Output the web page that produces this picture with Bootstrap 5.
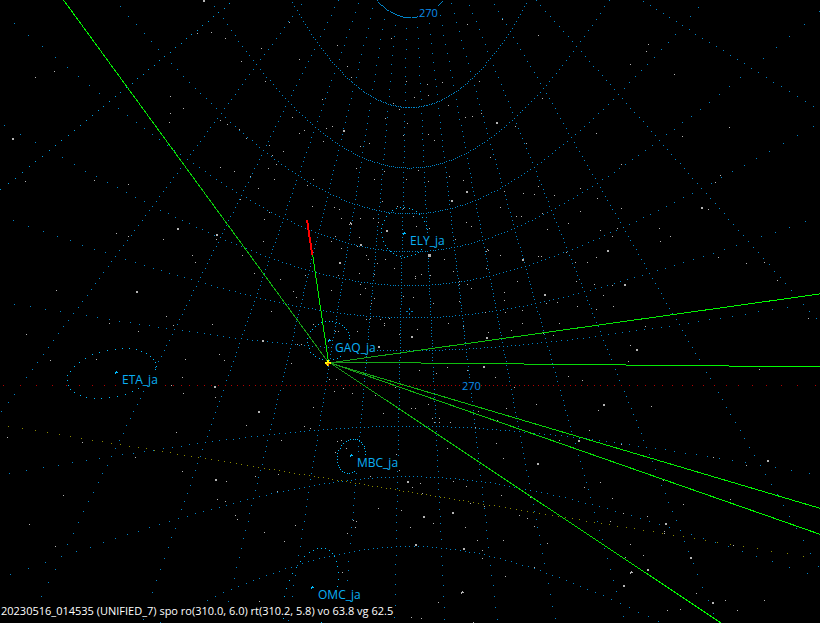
<!DOCTYPE html>
<html lang="en">
<head>
<meta charset="utf-8">
<meta name="viewport" content="width=device-width, initial-scale=1">
<title>Meteor radiant chart</title>
<link href="https://cdn.jsdelivr.net/npm/bootstrap@5.3.0/dist/css/bootstrap.min.css" rel="stylesheet">
<style>
body { background: #000; font-family: "Open Sans", "Noto Sans", sans-serif; font-size: 12px; }
.sky { shape-rendering: crispEdges; }
.sky text { font-family: "Open Sans", "Noto Sans", sans-serif; font-size: 12px; fill: #0ab0f4; }
.sky .ra-label { font-size: 11px; fill: #0a8cec; }
.grid-dots { fill: #0084c8; }
.zero-dots { fill: #00a0e4; }
.equator-dots { fill: #b40000; }
.ecliptic-dots { fill: #8c8c00; }
.shower-dots { fill: #00bcff; }
.star-dots { fill: #b4b4b4; }
.label-back { fill: #000; }
.status-line { color: #fff; font-size: 11px; line-height: 16px; padding: 0 1px 4px; }
.status-line span { background: #000; }
</style>
<script src="https://cdn.jsdelivr.net/npm/bootstrap@5.3.0/dist/js/bootstrap.bundle.min.js"></script>
</head>
<body>
<main class="position-relative vh-100 overflow-hidden">
  <svg class="sky d-block w-100 h-100" viewBox="0 0 820 623" preserveAspectRatio="xMidYMid slice" role="img" aria-label="Sky chart with meteor showers">
    <defs>
      <radialGradient id="trace" gradientUnits="userSpaceOnUse" cx="328" cy="362" r="500">
        <stop offset="0" stop-color="#1c961c"/>
        <stop offset=".2" stop-color="#10b810"/>
        <stop offset=".5" stop-color="#08dc08"/>
        <stop offset=".9" stop-color="#00ff00"/>
      </radialGradient>
    </defs>
    <path id="grid" class="grid-dots"/>
    <path id="zero" class="zero-dots"/>
    <path id="equator" class="equator-dots"/>
    <path id="ecliptic" class="ecliptic-dots"/>
    <path id="stars" class="star-dots"/>
    <path id="showers" class="shower-dots"/>
    <path class="grid-dots" d="M406 311h2v1h-2zM411 311h2v1h-2zM409 308h1v2h-1zM409 313h1v2h-1z"/>
    <g id="labels">
      <text class="ra-label" x="419" y="17">270</text>
      <text class="ra-label" x="462" y="390">270</text>
      <text x="410" y="245">ELY_ja</text>
      <text x="335" y="352">GAQ_ja</text>
      <text x="122" y="384">ETA_ja</text>
      <text x="357" y="467">MBC_ja</text>
      <text x="318" y="599">OMC_ja</text>
    </g>
    <g fill="none" stroke="url(#trace)" stroke-width="1">
      <path d="M328 362L63.5 0"/>
      <path d="M328 363.1L820 293.9"/>
      <path d="M328 362.1L820 366.9"/>
      <path d="M328 362.5L820 508.3"/>
      <path d="M328 362.1L820 534.3"/>
      <path d="M328 361.5L721 623"/>
    </g>
    <path d="M312.5 254L328.5 362" stroke="#00f000"/>
    <path d="M307 220L312.3 255" stroke="#ff0000" stroke-width="2"/>
    <path fill="#ffff00" d="M327 360h2v6h-2zM325 362h6v2h-6z"/>
    <path fill="#ff8000" d="M327 363h3v1h-3zM328 364h1v2h-1zM326 364h1v1h-1z"/>
  </svg>
  <div class="status-line position-absolute bottom-0 start-0 text-nowrap"><span>20230516_014535 (UNIFIED_7) spo ro(310.0, 6.0) rt(310.2, 5.8) vo 63.8 vg 62.5</span></div>
</main>
<script>
const RAD = Math.PI / 180;
const view = { x: 410, y: 311.5, scale: 183.6, ra: 286.95, dec: 22 };

// Gnomonic projection, right ascension growing to the left
function project(ra, dec) {
  const a = (ra - view.ra) * RAD, d = dec * RAD, d0 = view.dec * RAD;
  const c = Math.sin(d0) * Math.sin(d) + Math.cos(d0) * Math.cos(d) * Math.cos(a);
  if (c < 0.05) return null;
  return [
    view.x - view.scale * Math.cos(d) * Math.sin(a) / c,
    view.y - view.scale * (Math.cos(d0) * Math.sin(d) - Math.sin(d0) * Math.cos(d) * Math.cos(a)) / c
  ];
}
function unproject(px, py) {
  const x = (view.x - px) / view.scale, y = (view.y - py) / view.scale, d0 = view.dec * RAD;
  const c = Math.atan(Math.hypot(x, y)), r = Math.hypot(x, y);
  const dec = Math.asin(Math.cos(c) * Math.sin(d0) + y * Math.sin(c) * Math.cos(d0) / r);
  const ra = Math.atan2(x * Math.sin(c), r * Math.cos(d0) * Math.cos(c) - y * Math.sin(d0) * Math.sin(c));
  return [view.ra + ra / RAD, dec / RAD];
}
function dot(p, size = 1) {
  if (!p || p[0] < 0 || p[0] > 820 || p[1] < 0 || p[1] > 623) return "";
  return `M${Math.floor(p[0])} ${Math.floor(p[1])}h${size}v${size}h-${size}z`;
}
const put = (id, d) => document.getElementById(id).setAttribute("d", d);

let grid = "", zero = "", equator = "", ecliptic = "";
for (let ra = 0; ra < 360; ra++) {
  for (let dec = -80; dec <= 80; dec += 10) {
    if (dec) grid += dot(project(ra, dec)); else equator += dot(project(ra, 0));
  }
}
for (let ra = 0; ra < 360; ra += 10) {
  for (let dec = -79; dec < 80; dec++) {
    if (dec === 0) continue;
    if (ra) grid += dot(project(ra, dec)); else zero += dot(project(ra, dec));
  }
}
const eps = 23.44 * RAD;
for (let l = 0; l < 360; l++) {
  const s = Math.sin(l * RAD);
  ecliptic += dot(project(Math.atan2(s * Math.cos(eps), Math.cos(l * RAD)) / RAD, Math.asin(s * Math.sin(eps)) / RAD));
}
put("grid", grid); put("zero", zero); put("equator", equator); put("ecliptic", ecliptic);

// Shower radiants: chart position and radius in degrees
let showers = "";
for (const [x, y, r] of [[404.5, 233.5, 6.5], [329.5, 340.5, 5.4], [116.5, 372.5, 3.8], [351.5, 455.5, 3.2], [312.5, 587.5, 4]]) {
  const [ra, dec] = unproject(x, y), d = dec * RAD, R = r * RAD;
  for (let t = 0; t < 360; t += 10) {
    const T = t * RAD;
    const d2 = Math.asin(Math.sin(d) * Math.cos(R) + Math.cos(d) * Math.sin(R) * Math.cos(T));
    const a2 = Math.atan2(Math.sin(T) * Math.sin(R) * Math.cos(d), Math.cos(R) - Math.sin(d) * Math.sin(d2));
    showers += dot(project(ra + a2 / RAD, d2 / RAD));
  }
  const cx = Math.floor(x), cy = Math.floor(y);
  showers += `M${cx - 1} ${cy}h3v1h-3zM${cx} ${cy - 1}h1v1h-1zM${cx - 1} ${cy + 1}h1v1h-1z`;
}
put("showers", showers);

const faint = `35,77 54,71 25,181 94,180 128,184 170,96 183,108 170,113 169,122 197,33 211,32 225,38 261,48 241,61 265,81 220,120 227,124 239,129 246,138 269,145 272,155 276,164 268,168 274,179 220,167 234,171 250,176 258,188 240,199
289,22 337,45 299,59 391,38 347,66 351,77 322,99 467,24 502,19 538,35 406,81 427,84 442,82 479,81 428,95 414,97 393,103 399,109 385,118 407,123 448,105 465,117 472,116 481,113 542,98 515,126 292,117 304,130 299,133 326,128 332,126 323,141 283,151 360,146 369,143 403,135 428,134 434,140 418,170 428,181 449,176 463,180 406,179 384,171 356,168 374,179 313,179 307,185 312,206 339,209 334,207 382,201 397,206 490,157 526,143 504,191 523,193 534,194 538,186 500,207
648,44 646,51 630,64 674,74 596,133 621,164 682,136 729,127 720,175 715,182 580,188 554,195 597,198 621,208 708,209
116,233 128,236 163,239 192,255 195,262 216,239 56,290 242,255 254,273 264,219 269,212 263,241 271,311 26,334 109,323 138,331 166,316 173,325 212,324 96,359 50,360 185,359 219,354 224,360 182,377 157,386 171,385 183,393 215,397
341,218 349,224 351,223 350,222 350,223 351,224 360,218 373,218 378,222 403,208 413,216 416,226 429,228 424,238 331,241 335,236 359,237 341,248 357,246 366,255 368,259 385,259 377,263 394,268 374,274 359,273 338,275 360,284 365,288 360,294 331,290 371,303 374,298 403,296 413,297 415,276 415,278 421,274 430,275 444,259 453,271 459,281 459,284 467,284 471,288 459,301 433,303 463,326 455,239 466,222 471,226 516,216 521,216 542,213 487,249 488,250 500,255 486,251 486,268 538,256 504,292 504,300 517,281 546,303 485,312 505,312 522,310 522,323 511,330 488,332 543,333 448,323 280,279 293,291 305,275 271,311 296,297 297,344 301,344 291,363 313,324 338,331 335,331 357,331 357,344 334,348 384,323 384,325 389,318 380,319 370,318 366,319 399,334 417,329 419,370 436,373 447,367 495,377 514,387 467,370 536,404 506,408 478,411 428,404 411,408 415,408 375,395 395,387 352,393 343,388 334,391 313,407 329,379 336,379
580,211 547,229 568,223 566,252 600,230 612,236 617,228 659,228 670,236 660,241 541,256 575,262 587,262 596,257 576,281 594,284 612,285 603,295 613,306 596,309 577,306 557,302 559,323 553,335 645,326 630,345 628,361 568,376 582,380 598,410 651,406 718,257 746,263 764,262 777,280 808,318 759,369
7,437 82,442 135,457 176,432 246,425 182,471 226,481 63,495 29,524 55,546 217,499 225,501 235,515 237,519 264,532 255,476 277,491 278,474 259,601
383,413 304,426 310,428 281,440 337,441 341,440 346,448 335,452 370,476 399,470 396,454 432,418 434,422 439,418 439,422 450,422 447,448 475,427 497,420 496,443 503,458 412,487 420,483 422,493 453,481 466,486 501,495 470,503 484,506 530,497 378,508 401,510 410,527 433,523 465,527 519,515 527,518 534,526 477,540 503,540 482,550 482,558 505,576 534,567 353,520 356,521 355,527 347,533 295,525 284,541 342,572 438,602 411,617 421,618 473,622 461,592 463,592 462,591 462,592 461,593
589,430 559,440 621,444 640,455 713,457 746,465 600,482 584,487 612,498 663,480 683,504 730,499 623,513 647,516 610,521 664,531 664,533 733,545 547,543 630,544 625,557 643,555 696,593 725,600 667,610 680,609 737,610 764,600 630,572 631,572 632,572 631,571 630,573`;
const bright = `203,0 12,138 343,130 496,122 466,191 451,200 701,207 177,228 216,234 136,291 262,340 214,386 258,411 386,230 360,244 339,262 522,259 544,294 411,336 378,346 486,337 483,366 607,250 624,284 636,349 603,404 215,479 407,481 537,463 452,512 423,516 415,544 463,548 578,440 767,460 665,523 690,557 647,569 623,585 712,602`;
const parse = s => s.trim().split(/\s+/).map(p => p.split(",").map(Number));
put("stars", parse(faint).map(p => dot(p)).join("") + parse(bright).map(p => dot(p, 2)).join("") + dot([428, 254], 3));

// Opaque backing keeps each label readable over the grid
for (const text of document.querySelectorAll("#labels text")) {
  const box = text.getBBox();
  const back = document.createElementNS("http://www.w3.org/2000/svg", "rect");
  back.setAttribute("class", "label-back");
  back.setAttribute("x", box.x - 1);
  back.setAttribute("y", box.y + 1);
  back.setAttribute("width", box.width + 1);
  back.setAttribute("height", box.height - 1);
  text.before(back);
}
</script>
</body>
</html>
